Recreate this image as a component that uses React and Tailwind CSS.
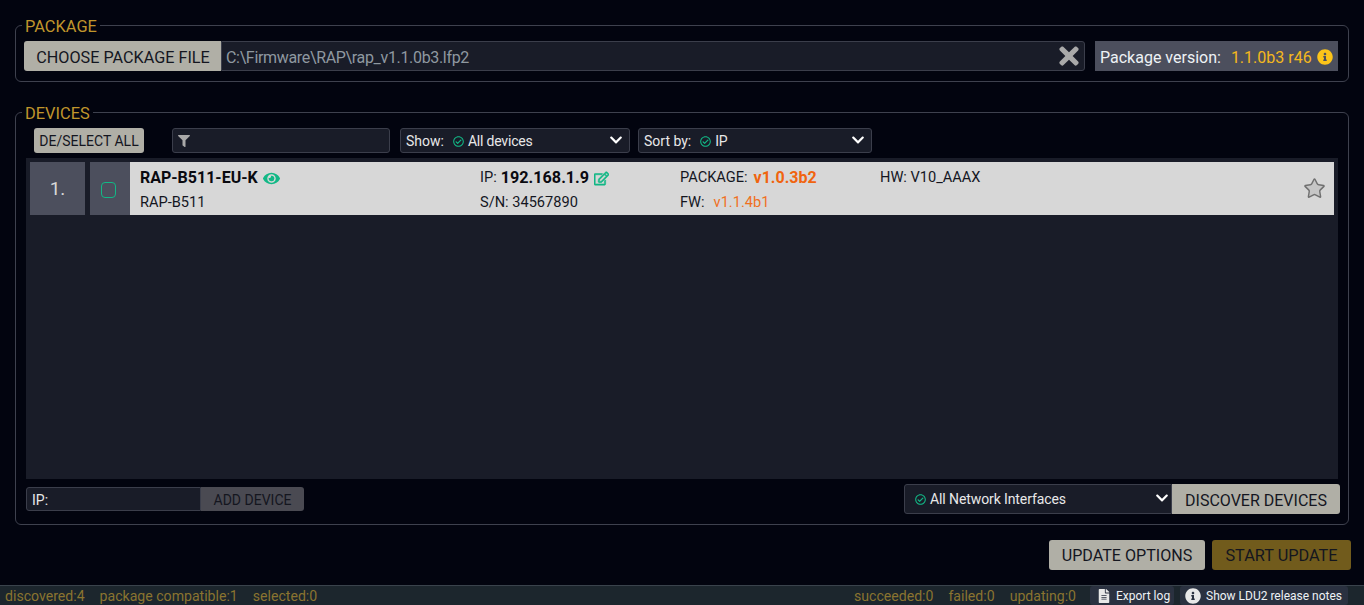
import React from "react";
import { FaFilter, FaTimes, FaInfoCircle, FaEye, FaRegEdit, FaChevronDown, FaRegCheckCircle, FaFileAlt } from "react-icons/fa";
import { Star } from "lucide-react";

function Dropdown({ label, value, className }) {
  return (
    <div className={"flex items-center h-[25px] rounded-[3px] border border-[#3b3e4b] bg-[#191c28] pl-[5px] pr-[6px] text-[14px] text-[#e8e8e8] " + className}>
      <span className="pt-[2px]">{label}</span>
      <FaRegCheckCircle className="ml-[9px] mr-[4px] mt-[1px] text-[11px] text-[#12b886]" />
      <span className="pt-[2px] tracking-[-0.2px]">{value}</span>
      <FaChevronDown className="ml-auto mt-[-2px] text-[14px] text-white" />
    </div>
  );
}

function Section({ title, className, children }) {
  return (
    <fieldset className={"mx-[15px] rounded-[6px] border border-[#3e414e] " + className}>
      <legend className="ml-[6px] px-[3px] pt-[4px] text-[16.4px] leading-[20px] text-[#c0962c]">{title}</legend>
      {children}
    </fieldset>
  );
}

export default function App() {
  return (
    <div className="flex h-[605px] w-[1364px] flex-col overflow-hidden bg-[#02040f] pt-[13px] text-[14px] font-['Roboto',sans-serif]">
      <Section title="PACKAGE" className="h-[69px]">
        <div className="mt-[4px] flex h-[30px] items-stretch pl-[8px] pr-[10px]">
          <button className="w-[197px] rounded-l-[3px] bg-[#b0afa6] pl-[1px] pt-[4px] text-[16.2px] text-[#14161f]">CHOOSE PACKAGE FILE</button>
          <div className="flex w-[864px] items-center rounded-r-[3px] border border-[#3b3e4b] bg-[#191c28] pl-[4px] pr-[5px] text-[#8f98a0]">
            <span className="pt-[4px] text-[16px] tracking-[-0.33px]">C:\Firmware\RAP\rap_v1.1.0b3.lfp2</span>
            <FaTimes className="ml-auto mr-[-4px] text-[28px] text-[#a9a9a9]" />
          </div>
          <div className="ml-[10px] flex w-[243px] items-center bg-[#4c4f5d] pl-[5px] text-[16px] text-[#eef2f5]">
            <span className="pt-[4px]">Package version:</span>
            <span className="ml-[10px] pt-[4px] text-[#f4b81c]">1.1.0b3 r46</span>
            <FaInfoCircle className="ml-[5px] mt-[1px] text-[16px] text-[#fcc419]" />
          </div>
        </div>
      </Section>

      <Section title="DEVICES" className="mt-[18px] h-[425px]">
        <div className="mt-[4px] flex h-[25px] items-center px-[10px]">
          <button className="ml-[8px] h-[25px] w-[110px] rounded-[3px] bg-[#b0afa6] pt-[2px] text-[14px] text-[#14161f]">DE/SELECT ALL</button>
          <div className="ml-[28px] flex h-[25px] w-[218px] items-center rounded-[3px] border border-[#3b3e4b] bg-[#191c28] pl-[5px]">
            <FaFilter className="text-[12px] text-[#a9a9a9]" />
          </div>
          <Dropdown label="Show:" value="All devices" className="ml-[10px] w-[230px]" />
          <Dropdown label="Sort by:" value="IP" className="ml-[8px] w-[234px]" />
        </div>

        <div className="mx-[10px] mt-[5px] h-[321px] bg-[#191c28] p-[4px]">
          <div className="flex h-[53px]">
            <div className="flex w-[55px] items-center justify-center bg-[#4c4f5d] pt-[2px] text-[19px] text-[#d8d8d8]">1.</div>
            <div className="ml-[5px] flex w-[40px] items-center justify-center bg-[#4c4f5d] pr-[3px] pt-[2px]">
              <div className="h-[16px] w-[15px] rounded-[4px] border-[1.5px] border-[#12b886]" />
            </div>
            <div className="relative flex flex-1 bg-[#d7d7d7] pl-[10px] text-[14.6px] text-[#14161f]">
              <div className="w-[340px] pt-[6px]">
                <div className="flex h-[20px] items-center text-[16px] font-bold text-[#0a0a10]">
                  RAP-B511-EU-K
                  <FaEye className="ml-[5px] text-[17px] text-[#12b886]" />
                </div>
                <div className="mt-[4px] leading-[20px]">RAP-B511</div>
              </div>
              <div className="w-[200px] pt-[6px]">
                <div className="flex h-[20px] items-center">
                  IP:
                  <span className="ml-[4px] text-[16.2px] font-bold text-[#0a0a10]">192.168.1.9</span>
                  <FaRegEdit className="ml-[5px] stroke-[#12b886] stroke-[20] text-[15px] text-[#12b886]" />
                </div>
                <div className="mt-[4px] leading-[20px]">S/N: 34567890</div>
              </div>
              <div className="w-[200px] pt-[6px]">
                <div className="flex h-[20px] items-center">
                  PACKAGE:
                  <span className="ml-[6px] text-[16px] font-bold text-[#f0640f]">v1.0.3b2</span>
                </div>
                <div className="mt-[4px] leading-[20px]">
                  FW:<span className="ml-[9px] text-[#f0701e]">v1.1.4b1</span>
                </div>
              </div>
              <div className="pt-[5px] leading-[20px]">HW: V10_AAAX</div>
              <Star className="absolute right-[8px] top-[15px] h-[23px] w-[23px] fill-[#c6c6c6] text-[#707070]" strokeWidth={1.5} />
            </div>
          </div>
        </div>

        <div className="mt-[5px] flex h-[30px] items-center px-[10px]">
          <div className="flex h-[24px] w-[175px] items-center rounded-l-[3px] border border-[#3b3e4b] bg-[#191c28] pl-[5px] pt-[2px] text-[14px] text-[#e8e8e8]">IP:</div>
          <button className="h-[24px] w-[103px] rounded-r-[3px] bg-[#4a4a52] pt-[2px] text-[14px] text-[#14161f]">ADD DEVICE</button>
          <div className="ml-auto flex h-[30px] w-[268px] items-center rounded-l-[3px] border border-[#3b3e4b] bg-[#191c28] pl-[10px] pr-[2px] text-[14px] text-[#e8e8e8]">
            <FaRegCheckCircle className="mr-[4px] text-[11px] text-[#12b886]" />
            <span className="tracking-[-0.1px]">All Network Interfaces</span>
            <FaChevronDown className="ml-auto mt-[-2px] text-[14px] text-white" />
          </div>
          <button className="mr-[-2px] h-[30px] w-[168px] rounded-r-[3px] bg-[#b0afa6] pt-[3px] text-[16px] text-[#14161f]">DISCOVER DEVICES</button>
        </div>
      </Section>

      <div className="mt-[15px] flex justify-end pr-[13px]">
        <button className="h-[30px] w-[156px] rounded-[3px] bg-[#b0afa6] pt-[3px] text-[16.1px] text-[#14161f]">UPDATE OPTIONS</button>
        <button className="ml-[7px] h-[30px] w-[139px] rounded-[3px] bg-[#715b1c] pt-[3px] text-[16.3px] text-[#14161f]">START UPDATE</button>
      </div>

      <div className="mt-auto flex h-[20px] items-center border-t border-[#3a434c] bg-[#1c262d] pl-[5px] pr-[16px] text-[14.1px] text-[#8a7430]">
        <span className="pt-[2px]">discovered:4</span>
        <span className="ml-[15px] pt-[2px]">package compatible:1</span>
        <span className="ml-[15px] pt-[2px]">selected:0</span>
        <span className="ml-auto pt-[2px]">succeeded:0</span>
        <span className="ml-[15px] pt-[2px]">failed:0</span>
        <span className="ml-[15px] pt-[2px]">updating:0</span>
        <div className="ml-[14px] flex h-[19px] w-[84px] items-center rounded-[3px] bg-[#2a3140] pl-[7px] text-[12px] text-[#eef2f5]">
          <FaFileAlt className="mr-[5px] text-[14px] text-[#e8e8e8]" />
          Export log
        </div>
        <div className="ml-[6px] flex h-[19px] w-[168px] items-center rounded-[3px] bg-[#2a3140] pl-[5px] text-[12px] text-[#eef2f5]">
          <FaInfoCircle className="mr-[5px] text-[16px] text-[#e8e8e8]" />
          Show LDU2 release notes
        </div>
      </div>
    </div>
  );
}
